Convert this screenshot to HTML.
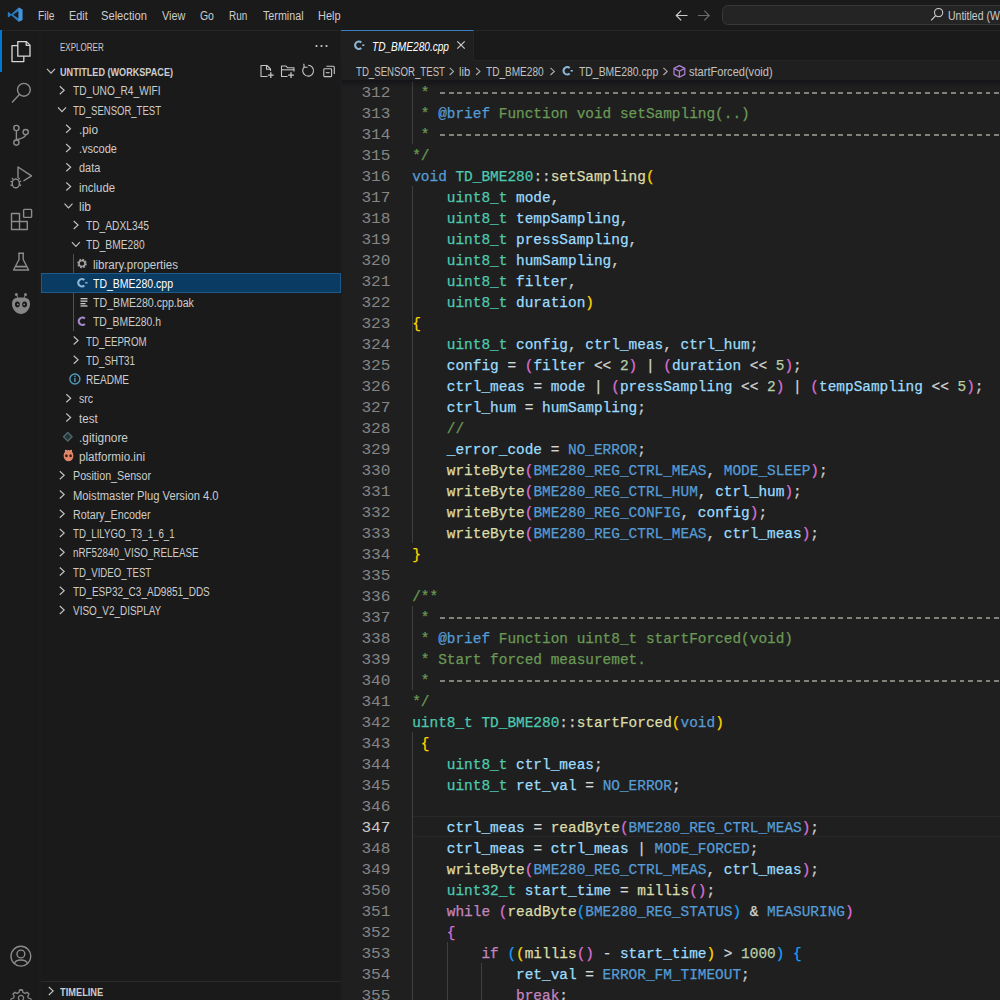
<!DOCTYPE html><html><head><meta charset="utf-8"><style>*{margin:0;padding:0;box-sizing:border-box}
html,body{width:1000px;height:1000px;overflow:hidden;background:#1f1f1f;font-family:"Liberation Sans",sans-serif}
.abs{position:absolute}
#title{left:0;top:0;width:1000px;height:31px;background:#1a1a1a;border-bottom:1px solid #252525}
.menu{position:absolute;top:8px;font-size:12px;color:#cccccc;line-height:14px;white-space:nowrap}
#act{left:0;top:31px;width:41px;height:969px;background:#1a1a1a;border-right:2px solid #1c1c1c}
#side{left:41px;top:31px;width:301px;height:969px;background:#1a1a1a;border-right:2px solid #1c1c1c}
.row{position:absolute;font-size:12px;color:#cccccc;line-height:14px;white-space:nowrap}
#tabs{left:342px;top:31px;width:658px;height:30px;background:#1a1a1a;border-bottom:1px solid #242424}
#tab{left:341px;top:30px;width:133px;height:31px;background:#1f1f1f;border-top:1.5px solid #3a7fc0;border-right:1px solid #242424}
#bc{left:342px;top:61px;width:658px;height:19px;background:#1f1f1f}
.bct{position:absolute;font-size:12px;color:#a9a9a9;line-height:14px;white-space:nowrap}
#code{left:342px;top:80px;width:658px;height:920px;background:#1f1f1f}
.ln{position:absolute;left:341px;width:49.5px;text-align:right;transform-origin:100% 50%;transform:scaleX(1.12);font-family:"Liberation Mono",monospace;font-size:14.43px;line-height:21px;height:21px;color:#858585}
.cl{position:absolute;left:412.2px;font-family:"Liberation Mono",monospace;font-size:14.43px;line-height:21px;height:21px;color:#cccccc;white-space:pre;-webkit-text-stroke:0.25px currentColor}
.c{color:#6a9955}.k{color:#569cd6}.ty{color:#4ec9b0}.f{color:#dcdcaa}.v{color:#9cdcfe}.n{color:#b5cea8}.m{color:#569cd6}.cf{color:#c586c0}.o{color:#d4d4d4}
.b1{color:#ffd700}.b2{color:#da70d6}.b3{color:#179fff}.dash{position:absolute;left:440.2px;width:600px;height:1.7px;background:repeating-linear-gradient(90deg,#82827a 0,#82827a 4.9px,transparent 4.9px,transparent 8.66px)}
.ig{position:absolute;width:1px;background:#404040}
svg{position:absolute;overflow:visible}
.ln.act{color:#cccccc}
</style></head><body>
<div id="title" class="abs"></div>
<div class="menu" style="left:38.20px;top:9.00px;transform-origin:0 0;transform:scaleX(0.8549);color:#cccccc;">File</div>
<div class="menu" style="left:69.10px;top:9.00px;transform-origin:0 0;transform:scaleX(0.9034);color:#cccccc;">Edit</div>
<div class="menu" style="left:101.40px;top:9.00px;transform-origin:0 0;transform:scaleX(0.9291);color:#cccccc;">Selection</div>
<div class="menu" style="left:161.80px;top:9.00px;transform-origin:0 0;transform:scaleX(0.9031);color:#cccccc;">View</div>
<div class="menu" style="left:199.90px;top:9.00px;transform-origin:0 0;transform:scaleX(0.8688);color:#cccccc;">Go</div>
<div class="menu" style="left:228.80px;top:9.00px;transform-origin:0 0;transform:scaleX(0.8273);color:#cccccc;">Run</div>
<div class="menu" style="left:263.10px;top:9.00px;transform-origin:0 0;transform:scaleX(0.8940);color:#cccccc;">Terminal</div>
<div class="menu" style="left:318.40px;top:9.00px;transform-origin:0 0;transform:scaleX(0.9150);color:#cccccc;">Help</div>
<svg style="left:0;top:0" width="1" height="1">
<path d="M18.6 7.6 L22.4 9.4 L22.4 20 L18.6 21.8 L11.2 15.2 L8.6 17.3 L7.8 16.8 L7.8 12.6 L8.6 12.1 L11.2 14.2 Z M18.6 11 L13.2 14.7 L18.6 18.4 Z" fill="#2a7cc2"/>
<path d="M18.6 7.6 L22.4 9.4 L22.4 20 L18.6 21.8 Z" fill="#4592d6"/>
</svg>
<svg style="left:0;top:0" width="1" height="1">
<path d="M687.5 15.5 L676.5 15.5 M681.2 10.6 L676.3 15.5 L681.2 20.4" fill="none" stroke="#cccccc" stroke-width="1.2"/>
<path d="M698 15.5 L709 15.5 M704.3 10.6 L709.2 15.5 L704.3 20.4" fill="none" stroke="#6b6b6b" stroke-width="1.2"/>
</svg>
<div class="abs" style="left:722px;top:4.5px;width:300px;height:20.5px;background:#242424;border:1px solid #383838;border-radius:6px"></div>
<svg style="left:0;top:0" width="1" height="1">
<circle cx="938.6" cy="12.6" r="4.1" fill="none" stroke="#cccccc" stroke-width="1.1"/>
<path d="M935.6 15.7 L931.2 20.3" stroke="#cccccc" stroke-width="1.2"/>
</svg>
<div class="menu" style="left:947.50px;top:9px;font-size:12px;transform-origin:0 0;transform:scaleX(0.8722)">Untitled (W</div>
<div id="act" class="abs"></div>
<div class="abs" style="left:0;top:30px;width:2px;height:42px;background:#0078d4"></div>
<svg style="left:0;top:0" width="1" height="1" fill="none" stroke-linejoin="round">
<g stroke="#d7d7d7" stroke-width="1.3">
<path d="M17.8 41.6 L26.5 41.6 L30 45.1 L30 56.2 L17.8 56.2 Z"/>
<path d="M17.8 45.6 L12 45.6 L12 61.6 L23.8 61.6 L23.8 56.2"/>
<path d="M26.2 41.8 L26.2 45.3 L29.8 45.3"/>
</g>
<g stroke="#8c8c8c" stroke-width="1.4">
<circle cx="23.9" cy="89.8" r="6.4"/>
<path d="M19.4 94.6 L12 102.4"/>
<circle cx="16.4" cy="128" r="2.6"/>
<circle cx="25.7" cy="132.1" r="2.6"/>
<circle cx="16.4" cy="142.6" r="2.6"/>
<path d="M16.4 130.6 L16.4 140 M25.7 134.7 C25.7 137.5 22 138 16.6 140"/>
<path d="M18 178 L18 167 L31.5 175.8 L23.4 181"/>
<ellipse cx="15.8" cy="183.4" rx="3.6" ry="4.4"/>
<path d="M10.5 181 L12.2 182 M10.5 185.5 L12.2 184.8 M21.1 181 L19.4 182 M21.1 185.5 L19.4 184.8 M13 179.3 L12 177.8 M18.6 179.3 L19.6 177.8"/>
<path d="M11.5 213.5 L19.5 213.5 L19.5 229.5 L11.5 229.5 Z M11.5 221.5 L27.3 221.5 L27.3 229.5 L19.5 229.5"/>
<rect x="23.6" y="209.4" width="8" height="8" rx="0.8"/>
<path d="M18.2 253.2 L24 253.2 M19 253.2 L19 259.5 L13.6 270 L28.6 270 L23.2 259.5 L23.2 253.2"/>
<path d="M15.6 266.6 L26.6 266.6" stroke-width="1.8"/>
<circle cx="20.9" cy="956.2" r="9.9"/>
<circle cx="20.9" cy="954" r="3.9"/>
<path d="M14.6 963.4 C15.5 958.8 26.3 958.8 27.2 963.4"/>
</g>
<g fill="#868686">
<path d="M12 304 C12 298 16 297.5 21 297.5 C26 297.5 30 298 30 304 C30 310 25 314 21 314 C17 314 12 310 12 304 Z"/>
<circle cx="16.4" cy="294.6" r="1.5"/><circle cx="25.5" cy="294.6" r="1.5"/>
</g>
<g fill="#181818">
<ellipse cx="17.4" cy="304.4" rx="2.4" ry="2.8"/><ellipse cx="24.6" cy="304.4" rx="2.4" ry="2.8"/>
</g>
<g fill="#868686"><circle cx="17.8" cy="304.4" r="0.9"/><circle cx="24.2" cy="304.4" r="0.9"/></g>
<path d="M16.4 295 L18 298 M25.5 295 L24 298" stroke="#868686" stroke-width="1"/>
<g transform="translate(21 998)" stroke="#868686" stroke-width="1.3" fill="none">
<circle r="2.6"/>
<path d="M-1.4 -8 L1.4 -8 L2 -5.6 L4 -4.6 L6.2 -5.8 L8 -4 L6.8 -1.8 L7.4 0 L10 1 L10 3"/>
<path d="M1.4 -8 L-1.4 -8 L-2 -5.6 L-4 -4.6 L-6.2 -5.8 L-8 -4 L-6.8 -1.8 L-7.4 0 L-10 1 L-10 3"/>
</g>
</svg>
<div id="side" class="abs"></div>
<div class="abs" style="left:41px;top:273px;width:300px;height:20px;background:#0a3b62;border:1px solid #1f5a8a"></div>
<div class="ig" style="left:73px;top:254px;height:19px;background:#505050"></div>
<div class="ig" style="left:73px;top:293px;height:38px;background:#505050"></div>
<div class="row" style="left:59.50px;top:64.90px;transform-origin:0 0;transform:scaleX(0.8266);color:#cccccc;font-weight:bold;font-size:11px">UNTITLED (WORKSPACE)</div>
<svg style="left:0;top:0" width="1" height="1"><path d="M47 68.8 L51 73.2 L55 68.8" fill="none" stroke="#c5c5c5" stroke-width="1.1"/></svg>
<div class="row" style="left:72.50px;top:84.35px;transform-origin:0 0;transform:scaleX(0.8480);color:#cccccc">TD_UNO_R4_WIFI</div>
<svg style="left:0;top:0" width="1" height="1"><path d="M59.8 86.25 L64.2 90.25 L59.8 94.25" fill="none" stroke="#c5c5c5" stroke-width="1.1"/></svg>
<div class="row" style="left:72.50px;top:103.60px;transform-origin:0 0;transform:scaleX(0.7949);color:#cccccc">TD_SENSOR_TEST</div>
<svg style="left:0;top:0" width="1" height="1"><path d="M58.0 107.3 L62.0 111.7 L66.0 107.3" fill="none" stroke="#c5c5c5" stroke-width="1.1"/></svg>
<div class="row" style="left:78.80px;top:122.85px;transform-origin:0 0;transform:scaleX(0.9845);color:#cccccc">.pio</div>
<svg style="left:0;top:0" width="1" height="1"><path d="M66.1 124.75 L70.5 128.75 L66.1 132.75" fill="none" stroke="#c5c5c5" stroke-width="1.1"/></svg>
<div class="row" style="left:78.80px;top:142.10px;transform-origin:0 0;transform:scaleX(0.9179);color:#cccccc">.vscode</div>
<svg style="left:0;top:0" width="1" height="1"><path d="M66.1 144.0 L70.5 148.0 L66.1 152.0" fill="none" stroke="#c5c5c5" stroke-width="1.1"/></svg>
<div class="row" style="left:79.00px;top:161.35px;transform-origin:0 0;transform:scaleX(0.9145);color:#cccccc">data</div>
<svg style="left:0;top:0" width="1" height="1"><path d="M66.3 163.25 L70.7 167.25 L66.3 171.25" fill="none" stroke="#c5c5c5" stroke-width="1.1"/></svg>
<div class="row" style="left:79.00px;top:180.60px;transform-origin:0 0;transform:scaleX(0.9474);color:#cccccc">include</div>
<svg style="left:0;top:0" width="1" height="1"><path d="M66.3 182.5 L70.7 186.5 L66.3 190.5" fill="none" stroke="#c5c5c5" stroke-width="1.1"/></svg>
<div class="row" style="left:79.00px;top:199.85px;transform-origin:0 0;transform:scaleX(1.0000);color:#cccccc">lib</div>
<svg style="left:0;top:0" width="1" height="1"><path d="M64.5 203.55 L68.5 207.95 L72.5 203.55" fill="none" stroke="#c5c5c5" stroke-width="1.1"/></svg>
<div class="row" style="left:86.40px;top:219.10px;transform-origin:0 0;transform:scaleX(0.8514);color:#cccccc">TD_ADXL345</div>
<svg style="left:0;top:0" width="1" height="1"><path d="M73.7 221.0 L78.10000000000001 225.0 L73.7 229.0" fill="none" stroke="#c5c5c5" stroke-width="1.1"/></svg>
<div class="row" style="left:86.40px;top:238.35px;transform-origin:0 0;transform:scaleX(0.8530);color:#cccccc">TD_BME280</div>
<svg style="left:0;top:0" width="1" height="1"><path d="M71.9 242.05 L75.9 246.45 L79.9 242.05" fill="none" stroke="#c5c5c5" stroke-width="1.1"/></svg>
<div class="row" style="left:93.00px;top:257.60px;transform-origin:0 0;transform:scaleX(0.9605);color:#cccccc">library.properties</div>
<svg style="left:0;top:0" width="1" height="1"><g transform="translate(82.0 263.5)"><circle r="3.6" fill="none" stroke="#a0a0a0" stroke-width="2.4" stroke-dasharray="1.6 1.2"/><circle r="3" fill="none" stroke="#a0a0a0" stroke-width="1.6"/></g></svg>

<div class="row" style="left:93.00px;top:276.85px;transform-origin:0 0;transform:scaleX(0.8753);color:#ffffff">TD_BME280.cpp</div>
<svg style="left:0;top:0" width="1" height="1"><path d="M84.38 280.00 A3.7 3.7 0 1 0 84.38 285.50" fill="none" stroke="#8cb6d6" stroke-width="2.1"/><rect x="85.30" y="281.95" width="2.2" height="1.6" fill="#8cb6d6"/></svg>
<div class="row" style="left:93.00px;top:296.10px;transform-origin:0 0;transform:scaleX(0.8844);color:#cccccc">TD_BME280.cpp.bak</div>
<svg style="left:0;top:0" width="1" height="1"><g fill="#cccccc"><rect x="80.5" y="298.0" width="7" height="1.3"/><rect x="80.5" y="300.5" width="7" height="1.3"/><rect x="80.5" y="303.0" width="5" height="1.3"/><rect x="80.5" y="305.3" width="7" height="1.3"/></g></svg>
<div class="row" style="left:93.00px;top:315.35px;transform-origin:0 0;transform:scaleX(0.8640);color:#cccccc">TD_BME280.h</div>
<svg style="left:0;top:0" width="1" height="1"><path d="M84.88 318.50 A3.7 3.7 0 1 0 84.88 324.00" fill="none" stroke="#a888cc" stroke-width="2.1"/></svg>
<div class="row" style="left:86.40px;top:334.60px;transform-origin:0 0;transform:scaleX(0.8112);color:#cccccc">TD_EEPROM</div>
<svg style="left:0;top:0" width="1" height="1"><path d="M73.7 336.5 L78.10000000000001 340.5 L73.7 344.5" fill="none" stroke="#c5c5c5" stroke-width="1.1"/></svg>
<div class="row" style="left:86.40px;top:353.85px;transform-origin:0 0;transform:scaleX(0.8167);color:#cccccc">TD_SHT31</div>
<svg style="left:0;top:0" width="1" height="1"><path d="M73.7 355.75 L78.10000000000001 359.75 L73.7 363.75" fill="none" stroke="#c5c5c5" stroke-width="1.1"/></svg>
<div class="row" style="left:86.40px;top:373.10px;transform-origin:0 0;transform:scaleX(0.8382);color:#cccccc">README</div>
<svg style="left:0;top:0" width="1" height="1"><circle cx="74.9" cy="379.0" r="5" fill="none" stroke="#519aba" stroke-width="1.4"/><rect x="74.2" y="378.0" width="1.4" height="4" fill="#519aba"/><rect x="74.2" y="375.7" width="1.4" height="1.4" fill="#519aba"/></svg>
<div class="row" style="left:79.00px;top:392.35px;transform-origin:0 0;transform:scaleX(0.8750);color:#cccccc">src</div>
<svg style="left:0;top:0" width="1" height="1"><path d="M66.3 394.25 L70.7 398.25 L66.3 402.25" fill="none" stroke="#c5c5c5" stroke-width="1.1"/></svg>
<div class="row" style="left:79.00px;top:411.60px;transform-origin:0 0;transform:scaleX(0.9637);color:#cccccc">test</div>
<svg style="left:0;top:0" width="1" height="1"><path d="M66.3 413.5 L70.7 417.5 L66.3 421.5" fill="none" stroke="#c5c5c5" stroke-width="1.1"/></svg>
<div class="row" style="left:78.50px;top:430.85px;transform-origin:0 0;transform:scaleX(0.9919);color:#cccccc">.gitignore</div>
<svg style="left:0;top:0" width="1" height="1"><path d="M67.8 432.45 L72.1 436.75 L67.8 441.05 L63.5 436.75 Z" fill="#283438" stroke="#506a72" stroke-width="1.3" stroke-linejoin="round"/></svg>
<div class="row" style="left:79.00px;top:450.10px;transform-origin:0 0;transform:scaleX(0.9706);color:#cccccc">platformio.ini</div>
<svg style="left:0;top:0" width="1" height="1"><ellipse cx="68.5" cy="455.7" rx="4.9" ry="5.6" fill="#e0876a"/><ellipse cx="66.4" cy="455.7" rx="1.3" ry="1.5" fill="#3a1a10"/><ellipse cx="70.6" cy="455.7" rx="1.3" ry="1.5" fill="#3a1a10"/><circle cx="65.9" cy="450.7" r="1" fill="#e8a080"/><circle cx="71.1" cy="450.7" r="1" fill="#e8a080"/></svg>
<div class="row" style="left:72.50px;top:469.35px;transform-origin:0 0;transform:scaleX(0.8924);color:#cccccc">Position_Sensor</div>
<svg style="left:0;top:0" width="1" height="1"><path d="M59.8 471.25 L64.2 475.25 L59.8 479.25" fill="none" stroke="#c5c5c5" stroke-width="1.1"/></svg>
<div class="row" style="left:72.50px;top:488.60px;transform-origin:0 0;transform:scaleX(0.9327);color:#cccccc">Moistmaster Plug Version 4.0</div>
<svg style="left:0;top:0" width="1" height="1"><path d="M59.8 490.5 L64.2 494.5 L59.8 498.5" fill="none" stroke="#c5c5c5" stroke-width="1.1"/></svg>
<div class="row" style="left:72.50px;top:507.85px;transform-origin:0 0;transform:scaleX(0.8950);color:#cccccc">Rotary_Encoder</div>
<svg style="left:0;top:0" width="1" height="1"><path d="M59.8 509.75 L64.2 513.75 L59.8 517.75" fill="none" stroke="#c5c5c5" stroke-width="1.1"/></svg>
<div class="row" style="left:72.50px;top:527.10px;transform-origin:0 0;transform:scaleX(0.8070);color:#cccccc">TD_LILYGO_T3_1_6_1</div>
<svg style="left:0;top:0" width="1" height="1"><path d="M59.8 529.0 L64.2 533.0 L59.8 537.0" fill="none" stroke="#c5c5c5" stroke-width="1.1"/></svg>
<div class="row" style="left:72.50px;top:546.35px;transform-origin:0 0;transform:scaleX(0.8188);color:#cccccc">nRF52840_VISO_RELEASE</div>
<svg style="left:0;top:0" width="1" height="1"><path d="M59.8 548.25 L64.2 552.25 L59.8 556.25" fill="none" stroke="#c5c5c5" stroke-width="1.1"/></svg>
<div class="row" style="left:72.50px;top:565.60px;transform-origin:0 0;transform:scaleX(0.8039);color:#cccccc">TD_VIDEO_TEST</div>
<svg style="left:0;top:0" width="1" height="1"><path d="M59.8 567.5 L64.2 571.5 L59.8 575.5" fill="none" stroke="#c5c5c5" stroke-width="1.1"/></svg>
<div class="row" style="left:72.50px;top:584.85px;transform-origin:0 0;transform:scaleX(0.8336);color:#cccccc">TD_ESP32_C3_AD9851_DDS</div>
<svg style="left:0;top:0" width="1" height="1"><path d="M59.8 586.75 L64.2 590.75 L59.8 594.75" fill="none" stroke="#c5c5c5" stroke-width="1.1"/></svg>
<div class="row" style="left:72.50px;top:604.10px;transform-origin:0 0;transform:scaleX(0.8282);color:#cccccc">VISO_V2_DISPLAY</div>
<svg style="left:0;top:0" width="1" height="1"><path d="M59.8 606.0 L64.2 610.0 L59.8 614.0" fill="none" stroke="#c5c5c5" stroke-width="1.1"/></svg>
<svg style="left:0;top:0" width="1" height="1"><g fill="none" stroke="#c5c5c5" stroke-width="1.1" stroke-linejoin="round">
<path d="M267.5 76.5 L261 76.5 L261 65.5 L267 65.5 L270.5 69 L270.5 71"/>
<path d="M266.5 65.7 L266.5 69.3 L270.3 69.3"/>
<path d="M270.8 72.2 L270.8 78 M267.9 75.1 L273.7 75.1" stroke-width="1.3"/>
<path d="M287.5 76.5 L281.5 76.5 L281.5 66 L286 66 L287.5 67.8 L294 67.8 L294 71.5"/>
<path d="M281.5 69.8 L294 69.8"/>
<path d="M291 72.2 L291 78 M288.1 75.1 L293.9 75.1" stroke-width="1.3"/>
<path d="M304.3 66.9 A5.4 5.4 0 1 0 308.1 65.3"/>
<path d="M303.8 63.8 L304.2 67.3 L307.6 67.2"/>
<rect x="323.8" y="68.8" width="7.8" height="7.8" rx="0.8"/>
<path d="M326.4 66.2 L333.2 66.2 Q334.3 66.2 334.3 67.3 L334.3 74"/>
<path d="M325.8 72.7 L329.6 72.7"/>
</g></svg>
<div class="row" style="left:59.50px;top:40.00px;font-size:11px;color:#cccccc;transform-origin:0 0;transform:scaleX(0.7306)">EXPLORER</div>
<svg style="left:0;top:0" width="1" height="1"><g fill="#cccccc"><circle cx="316.5" cy="46" r="1.1"/><circle cx="321.5" cy="46" r="1.1"/><circle cx="326.5" cy="46" r="1.1"/></g></svg>
<div class="abs" style="left:41px;top:981px;width:300px;height:1px;background:#2b2b2b"></div>
<svg style="left:0;top:0" width="1" height="1"><path d="M48.8 987 L53.2 991 L48.8 995" fill="none" stroke="#c5c5c5" stroke-width="1.1"/></svg>
<div class="row" style="left:60.00px;top:984.80px;font-size:11px;font-weight:bold;color:#cccccc;transform-origin:0 0;transform:scaleX(0.8421)">TIMELINE</div>
<div id="tabs" class="abs"></div><div id="tab" class="abs"></div><div id="bc" class="abs"></div>
<svg style="left:0;top:0" width="1" height="1">
<path d="M361.28 42.45 A3.7 3.7 0 1 0 361.28 47.95" fill="none" stroke="#8cb6d6" stroke-width="2.1"/><rect x="362.20" y="44.40" width="2.2" height="1.6" fill="#8cb6d6"/>
<path d="M457.3 41.3 L464.7 48.7 M464.7 41.3 L457.3 48.7" stroke="#cccccc" stroke-width="1.2"/>
</svg>
<div class="row" style="left:371.50px;top:39.60px;transform-origin:0 0;transform:scaleX(0.8425);color:#ffffff;font-style:italic">TD_BME280.cpp</div>
<div class="bct" style="left:356.00px;top:65.40px;transform-origin:0 0;transform:scaleX(0.8040);color:#c2c2c2;">TD_SENSOR_TEST</div>
<div class="bct" style="left:459.20px;top:65.40px;transform-origin:0 0;transform:scaleX(0.9333);color:#c2c2c2;">lib</div>
<div class="bct" style="left:486.40px;top:65.40px;transform-origin:0 0;transform:scaleX(0.8384);color:#c2c2c2;">TD_BME280</div>
<div class="bct" style="left:578.80px;top:65.40px;transform-origin:0 0;transform:scaleX(0.8665);color:#c2c2c2;">TD_BME280.cpp</div>
<div class="bct" style="left:688.80px;top:65.40px;transform-origin:0 0;transform:scaleX(0.9217);color:#c2c2c2;">startForced(void)</div>
<svg style="left:0;top:0" width="1" height="1">
<g fill="none" stroke="#b0b0b0" stroke-width="1.1"><path d="M449.7 67.8 L453.5 71.4 L449.7 75" /><path d="M476.1 67.8 L479.9 71.4 L476.1 75" /><path d="M550.5 67.8 L554.3 71.4 L550.5 75" /><path d="M663.4 67.8 L667.2 71.4 L663.4 75" /></g>
<path d="M569.68 68.05 A3.7 3.7 0 1 0 569.68 73.55" fill="none" stroke="#8cb6d6" stroke-width="2.1"/><rect x="570.60" y="70.00" width="2.2" height="1.6" fill="#8cb6d6"/>
<g fill="none" stroke="#b180d7" stroke-width="1.2" stroke-linejoin="round">
<path d="M679.4 65.6 L684.8 68.4 L684.8 74.4 L679.4 77.2 L674 74.4 L674 68.4 Z"/>
<path d="M674 68.4 L679.4 71.2 L684.8 68.4 M679.4 71.2 L679.4 77.2"/>
</g>
</svg>
<div id="code" class="abs"></div>
<div class="abs" style="left:412px;top:816px;width:600px;height:21px;border-top:1px solid #282828;border-bottom:1px solid #282828"></div>
<div class="ig" style="left:412.0px;top:81px;height:63px;background:#404040"></div>
<div class="ig" style="left:412.0px;top:186px;height:357px;background:#404040"></div>
<div class="ig" style="left:412.0px;top:606px;height:84px;background:#404040"></div>
<div class="ig" style="left:412.0px;top:732px;height:273px;background:#404040"></div>
<div class="ig" style="left:447.0px;top:942px;height:63px;background:#404040"></div>
<div class="ig" style="left:481.0px;top:963px;height:42px;background:#404040"></div>
<div class="abs" style="left:342px;top:80px;width:658px;height:8px;background:linear-gradient(rgba(5,5,15,0.4),rgba(0,0,0,0))"></div>
<div class="ln" style="top:82.8px">312</div>
<div class="cl" style="top:82.8px"> <span class="c">*</span></div>
<div class="dash" style="top:92.2px"></div>
<div class="ln" style="top:103.8px">313</div>
<div class="cl" style="top:103.8px"> <span class="c">*</span> <span class="k">@brief</span><span class="c"> Function void setSampling(..)</span></div>
<div class="ln" style="top:124.8px">314</div>
<div class="cl" style="top:124.8px"> <span class="c">*</span></div>
<div class="dash" style="top:134.2px"></div>
<div class="ln" style="top:145.8px">315</div>
<div class="cl" style="top:145.8px"><span class="c">*/</span></div>
<div class="ln" style="top:166.8px">316</div>
<div class="cl" style="top:166.8px"><span class="k">void</span> <span class="ty">TD_BME280</span>::<span class="f">setSampling</span><span class="b1">(</span></div>
<div class="ln" style="top:187.8px">317</div>
<div class="cl" style="top:187.8px">    <span class="ty">uint8_t</span> <span class="v">mode</span>,</div>
<div class="ln" style="top:208.8px">318</div>
<div class="cl" style="top:208.8px">    <span class="ty">uint8_t</span> <span class="v">tempSampling</span>,</div>
<div class="ln" style="top:229.8px">319</div>
<div class="cl" style="top:229.8px">    <span class="ty">uint8_t</span> <span class="v">pressSampling</span>,</div>
<div class="ln" style="top:250.8px">320</div>
<div class="cl" style="top:250.8px">    <span class="ty">uint8_t</span> <span class="v">humSampling</span>,</div>
<div class="ln" style="top:271.8px">321</div>
<div class="cl" style="top:271.8px">    <span class="ty">uint8_t</span> <span class="v">filter</span>,</div>
<div class="ln" style="top:292.8px">322</div>
<div class="cl" style="top:292.8px">    <span class="ty">uint8_t</span> <span class="v">duration</span><span class="b1">)</span></div>
<div class="ln" style="top:313.8px">323</div>
<div class="cl" style="top:313.8px"><span class="b1">{</span></div>
<div class="ln" style="top:334.8px">324</div>
<div class="cl" style="top:334.8px">    <span class="ty">uint8_t</span> <span class="v">config</span>, <span class="v">ctrl_meas</span>, <span class="v">ctrl_hum</span>;</div>
<div class="ln" style="top:355.8px">325</div>
<div class="cl" style="top:355.8px">    <span class="v">config</span> <span class="o">=</span> <span class="b2">(</span><span class="v">filter</span> <span class="o">&lt;&lt;</span> <span class="n">2</span><span class="b2">)</span> <span class="o">|</span> <span class="b2">(</span><span class="v">duration</span> <span class="o">&lt;&lt;</span> <span class="n">5</span><span class="b2">)</span>;</div>
<div class="ln" style="top:376.8px">326</div>
<div class="cl" style="top:376.8px">    <span class="v">ctrl_meas</span> <span class="o">=</span> <span class="v">mode</span> <span class="o">|</span> <span class="b2">(</span><span class="v">pressSampling</span> <span class="o">&lt;&lt;</span> <span class="n">2</span><span class="b2">)</span> <span class="o">|</span> <span class="b2">(</span><span class="v">tempSampling</span> <span class="o">&lt;&lt;</span> <span class="n">5</span><span class="b2">)</span>;</div>
<div class="ln" style="top:397.8px">327</div>
<div class="cl" style="top:397.8px">    <span class="v">ctrl_hum</span> <span class="o">=</span> <span class="v">humSampling</span>;</div>
<div class="ln" style="top:418.8px">328</div>
<div class="cl" style="top:418.8px">    <span class="c">//</span></div>
<div class="ln" style="top:439.8px">329</div>
<div class="cl" style="top:439.8px">    <span class="v">_error_code</span> <span class="o">=</span> <span class="m">NO_ERROR</span>;</div>
<div class="ln" style="top:460.8px">330</div>
<div class="cl" style="top:460.8px">    <span class="f">writeByte</span><span class="b2">(</span><span class="m">BME280_REG_CTRL_MEAS</span>, <span class="m">MODE_SLEEP</span><span class="b2">)</span>;</div>
<div class="ln" style="top:481.8px">331</div>
<div class="cl" style="top:481.8px">    <span class="f">writeByte</span><span class="b2">(</span><span class="m">BME280_REG_CTRL_HUM</span>, <span class="v">ctrl_hum</span><span class="b2">)</span>;</div>
<div class="ln" style="top:502.8px">332</div>
<div class="cl" style="top:502.8px">    <span class="f">writeByte</span><span class="b2">(</span><span class="m">BME280_REG_CONFIG</span>, <span class="v">config</span><span class="b2">)</span>;</div>
<div class="ln" style="top:523.8px">333</div>
<div class="cl" style="top:523.8px">    <span class="f">writeByte</span><span class="b2">(</span><span class="m">BME280_REG_CTRL_MEAS</span>, <span class="v">ctrl_meas</span><span class="b2">)</span>;</div>
<div class="ln" style="top:544.8px">334</div>
<div class="cl" style="top:544.8px"><span class="b1">}</span></div>
<div class="ln" style="top:565.8px">335</div>
<div class="ln" style="top:586.8px">336</div>
<div class="cl" style="top:586.8px"><span class="c">/**</span></div>
<div class="ln" style="top:607.8px">337</div>
<div class="cl" style="top:607.8px"> <span class="c">*</span></div>
<div class="dash" style="top:617.2px"></div>
<div class="ln" style="top:628.8px">338</div>
<div class="cl" style="top:628.8px"> <span class="c">*</span> <span class="k">@brief</span><span class="c"> Function uint8_t startForced(void)</span></div>
<div class="ln" style="top:649.8px">339</div>
<div class="cl" style="top:649.8px"> <span class="c">* Start forced measuremet.</span></div>
<div class="ln" style="top:670.8px">340</div>
<div class="cl" style="top:670.8px"> <span class="c">*</span></div>
<div class="dash" style="top:680.2px"></div>
<div class="ln" style="top:691.8px">341</div>
<div class="cl" style="top:691.8px"><span class="c">*/</span></div>
<div class="ln" style="top:712.8px">342</div>
<div class="cl" style="top:712.8px"><span class="ty">uint8_t</span> <span class="ty">TD_BME280</span>::<span class="f">startForced</span><span class="b1">(</span><span class="k">void</span><span class="b1">)</span></div>
<div class="ln" style="top:733.8px">343</div>
<div class="cl" style="top:733.8px"> <span class="b1">{</span></div>
<div class="ln" style="top:754.8px">344</div>
<div class="cl" style="top:754.8px">    <span class="ty">uint8_t</span> <span class="v">ctrl_meas</span>;</div>
<div class="ln" style="top:775.8px">345</div>
<div class="cl" style="top:775.8px">    <span class="ty">uint8_t</span> <span class="v">ret_val</span> <span class="o">=</span> <span class="m">NO_ERROR</span>;</div>
<div class="ln" style="top:796.8px">346</div>
<div class="ln act" style="top:817.8px">347</div>
<div class="cl" style="top:817.8px">    <span class="v">ctrl_meas</span> <span class="o">=</span> <span class="f">readByte</span><span class="b2">(</span><span class="m">BME280_REG_CTRL_MEAS</span><span class="b2">)</span>;</div>
<div class="ln" style="top:838.8px">348</div>
<div class="cl" style="top:838.8px">    <span class="v">ctrl_meas</span> <span class="o">=</span> <span class="v">ctrl_meas</span> <span class="o">|</span> <span class="m">MODE_FORCED</span>;</div>
<div class="ln" style="top:859.8px">349</div>
<div class="cl" style="top:859.8px">    <span class="f">writeByte</span><span class="b2">(</span><span class="m">BME280_REG_CTRL_MEAS</span>, <span class="v">ctrl_meas</span><span class="b2">)</span>;</div>
<div class="ln" style="top:880.8px">350</div>
<div class="cl" style="top:880.8px">    <span class="ty">uint32_t</span> <span class="v">start_time</span> <span class="o">=</span> <span class="f">millis</span><span class="b2">()</span>;</div>
<div class="ln" style="top:901.8px">351</div>
<div class="cl" style="top:901.8px">    <span class="cf">while</span> <span class="b2">(</span><span class="f">readByte</span><span class="b3">(</span><span class="m">BME280_REG_STATUS</span><span class="b3">)</span> <span class="o">&amp;</span> <span class="m">MEASURING</span><span class="b2">)</span></div>
<div class="ln" style="top:922.8px">352</div>
<div class="cl" style="top:922.8px">    <span class="b2">{</span></div>
<div class="ln" style="top:943.8px">353</div>
<div class="cl" style="top:943.8px">        <span class="cf">if</span> <span class="b3">(</span><span class="b1">(</span><span class="f">millis</span><span class="b2">()</span> <span class="o">-</span> <span class="v">start_time</span><span class="b1">)</span> <span class="o">&gt;</span> <span class="n">1000</span><span class="b3">)</span> <span class="b3">{</span></div>
<div class="ln" style="top:964.8px">354</div>
<div class="cl" style="top:964.8px">            <span class="v">ret_val</span> <span class="o">=</span> <span class="m">ERROR_FM_TIMEOUT</span>;</div>
<div class="ln" style="top:985.8px">355</div>
<div class="cl" style="top:985.8px">            <span class="cf">break</span>;</div>
</body></html>
